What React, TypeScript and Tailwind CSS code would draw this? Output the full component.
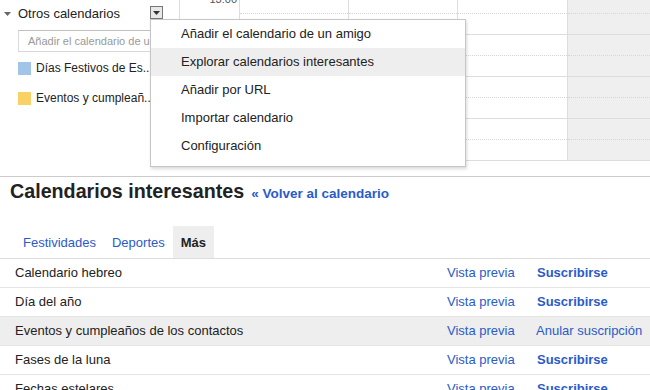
import React from "react";

const LINK = "text-[#2a5bc8]";

function Tri({ color = "#555" }: { color?: string }) {
  return (
    <svg width="7" height="4" viewBox="0 0 7 4" className="block">
      <polygon points="0,0 7,0 3.5,4" fill={color} />
    </svg>
  );
}

function DayColumn({ w, grey }: { w: string; grey?: boolean }) {
  return (
    <div className={`${w} shrink-0 h-full flex flex-col ${grey ? "bg-[#efefef] flex-1" : "border-r border-[#dddddd]"}`}>
      <div className="mt-[-7px] flex flex-col">
        {[0, 1, 2, 3].map((i) => (
          <div key={i} className="h-[42px] border-b border-[#dddddd]">
            <div className="h-[21px] border-b border-dotted border-[#d6d6d6]" />
          </div>
        ))}
      </div>
    </div>
  );
}

const menuItems = [
  "Añadir el calendario de un amigo",
  "Explorar calendarios interesantes",
  "Añadir por URL",
  "Importar calendario",
  "Configuración",
];

const rows = [
  { name: "Calendario hebreo", sub: true },
  { name: "Día del año", sub: true },
  { name: "Eventos y cumpleaños de los contactos", sub: false },
  { name: "Fases de la luna", sub: true },
  { name: "Fechas estelares", sub: true },
];

export default function App() {
  return (
    <div className="w-[650px] h-[390px] overflow-hidden bg-white relative font-['Liberation_Sans',Arial,sans-serif] text-[#222222]">
      {/* Top section */}
      <div className="flex h-[177px] border-b border-[#cccccc]">
        {/* Sidebar */}
        <div className="w-[179px] shrink-0 flex flex-col">
          <div className="h-[28px] flex items-center">
            <div className="ml-[4px]">
              <Tri color="#666" />
            </div>
            <span className="ml-[7px] text-[13px] leading-[16px]">Otros calendarios</span>
            <div className="ml-auto mr-[16px] self-start mt-[6px] w-[13px] h-[13px] border border-[#777] bg-[#e8e8e8] flex items-center justify-center">
              <Tri color="#333" />
            </div>
          </div>
          <div className="ml-[18px] mt-[2px] w-[150px] h-[22px] border border-[#d9d9d9] border-t-[#c0c0c0] pl-[9px] flex items-center text-[11px] text-[#999] whitespace-nowrap overflow-hidden">
            Añadir el calendario de un amigo
          </div>
          <div className="mt-[1px] flex flex-col">
            <div className="h-[30px] flex items-center">
              <div className="ml-[18px] w-[13px] h-[13px] bg-[#a2c4e9]" />
              <span className="ml-[5px] text-[12px] leading-[15px] whitespace-nowrap">Días Festivos de Es...</span>
            </div>
            <div className="h-[30px] flex items-center">
              <div className="ml-[18px] w-[13px] h-[13px] bg-[#fad165]" />
              <span className="ml-[5px] text-[12px] leading-[15px] whitespace-nowrap">Eventos y cumpleañ...</span>
            </div>
          </div>
        </div>
        {/* Grid */}
        <div className="flex-1 h-[161px] flex overflow-hidden">
          <div className="w-[61px] shrink-0 h-full border-x border-[#dddddd] relative">
            <div className="text-right pr-[2px] mt-[-6px] text-[11px] leading-[11px] text-[#555]">13:00</div>
          </div>
          <DayColumn w="w-[109px]" />
          <DayColumn w="w-[109px]" />
          <DayColumn w="w-[110px]" />
          <DayColumn w="w-auto" grey />
        </div>
      </div>

      {/* Dropdown menu */}
      <div className="absolute left-[150px] top-[19px] w-[316px] bg-white border border-[#c6c6c6] shadow-[1px_2px_3px_rgba(0,0,0,0.15)] pb-[6px]">
        {menuItems.map((m, i) => (
          <div
            key={m}
            className={`h-[28px] flex items-center pl-[30px] text-[13px] leading-[16px] text-[#222] ${i === 1 ? "bg-[#eeeeee]" : ""}`}
          >
            {m}
          </div>
        ))}
      </div>

      {/* Bottom section */}
      <div className="flex items-baseline pl-[10px] pt-[2px]">
        <h2 className="text-[19.7px] leading-[24px] font-bold text-[#222]">Calendarios interesantes</h2>
        <span className={`ml-[7px] text-[13.5px] font-bold ${LINK}`}>« Volver al calendario</span>
      </div>

      <div className="mt-[22px] flex pl-[15px] border-b border-[#dddddd]">
        <div className={`px-[8px] pt-[9px] pb-[7px] text-[13px] leading-[16px] ${LINK}`}>Festividades</div>
        <div className={`px-[8px] pt-[9px] pb-[7px] text-[13px] leading-[16px] ${LINK}`}>Deportes</div>
        <div className="px-[8px] pt-[9px] pb-[7px] text-[13px] leading-[16px] font-bold text-[#222] bg-[#eeeeee]">Más</div>
      </div>

      <div className="flex flex-col">
        {rows.map((r, i) => (
          <div
            key={r.name}
            className={`h-[29px] shrink-0 flex items-center border-b border-[#e5e5e5] text-[13px] leading-[16px] ${i === 2 ? "bg-[#eeeeee]" : ""}`}
          >
            <div className="w-[447px] shrink-0 pl-[15px] text-[#222]">{r.name}</div>
            <div className={`w-[90px] shrink-0 ${LINK}`}>Vista previa</div>
            {r.sub ? (
              <div className={`font-bold ${LINK}`}>Suscribirse</div>
            ) : (
              <div className={`ml-[-1px] ${LINK}`}>Anular suscripción</div>
            )}
          </div>
        ))}
      </div>
    </div>
  );
}
